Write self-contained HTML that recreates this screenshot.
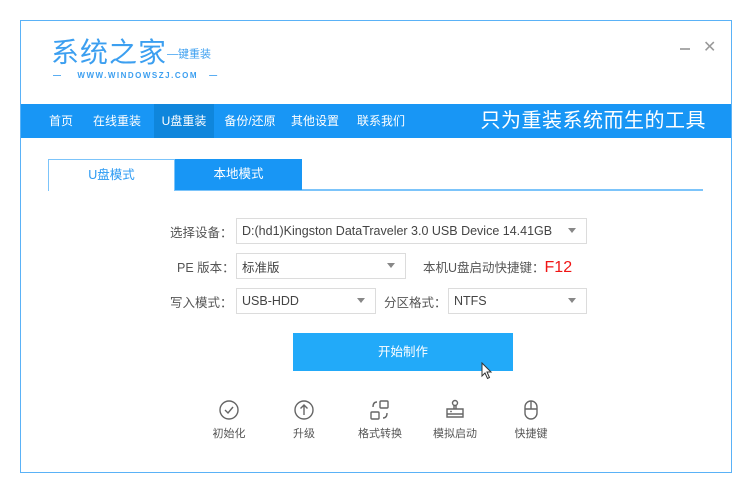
<!DOCTYPE html>
<html><head><meta charset="utf-8"><style>
*{margin:0;padding:0;box-sizing:border-box}
body{width:746px;height:485px;background:#fff;font-family:"Liberation Sans","Noto Sans CJK SC",sans-serif;position:relative;overflow:hidden;color:#555}
.win{position:absolute;left:20px;top:20px;width:712px;height:453px;border:1px solid #5ab2f7;background:#fff}
.a{position:absolute;white-space:nowrap}
.logo{left:51px;top:35px;font-size:28px;color:#3c9ff0;letter-spacing:1px;font-weight:normal;line-height:36px}
.nav{left:21px;top:104px;width:710px;height:34px;background:#1896f5}
.nav span{position:absolute;top:0;height:34px;line-height:34px;color:#fff;font-size:12px;text-align:center}
.sel{display:flex;align-items:center;height:24px;border:1px solid #dcdcdc;font-size:12.5px;color:#444;padding-left:5px}
.sel::after{content:"";position:absolute;right:10px;top:9px;border:4px solid transparent;border-top:5px solid #888}
.lbl{font-size:12.5px;color:#555}
.ic{font-size:11px;color:#555;text-align:center;width:60px}
</style></head><body>
<div class="win"></div>
<div class="a logo">系统之家<span style="font-size:11px;vertical-align:middle;letter-spacing:0">—键重装</span></div>
<div class="a" style="left:53px;top:71px;font-size:8px;color:#3c9ff0;letter-spacing:1.5px;font-weight:bold">—&nbsp;&nbsp;&nbsp;&nbsp;WWW.WINDOWSZJ.COM&nbsp;&nbsp;&nbsp;—</div>
<div class="a" style="left:680px;top:48px;width:10px;height:2px;background:#aaa"></div>
<div class="a" style="left:703px;top:37px;font-size:16px;color:#999">✕</div>
<div class="a nav">
<span style="left:20px;width:40px">首页</span>
<span style="left:66px;width:60px">在线重装</span>
<span style="left:133px;width:60px;background:#0f86dc">U盘重装</span>
<span style="left:198px;width:62px">备份/还原</span>
<span style="left:264px;width:60px">其他设置</span>
<span style="left:330px;width:60px">联系我们</span>
<span style="left:440px;width:245px;font-size:20px;text-align:right;letter-spacing:0.5px">只为重装系统而生的工具</span>
</div>
<div class="a" style="left:48px;top:189px;width:655px;height:2px;background:#7cc4fa"></div>
<div class="a" style="left:48px;top:159px;width:127px;height:32px;border:1px solid #7cc4fa;border-bottom:none;background:#fff;color:#2b9af3;font-size:12.5px;text-align:center;line-height:31px">U盘模式</div>
<div class="a" style="left:175px;top:159px;width:127px;height:31px;background:#1896f5;color:#fff;font-size:12.5px;text-align:center;line-height:31px">本地模式</div>
<div class="a lbl" style="left:170px;top:222px">选择设备：</div>
<div class="a sel" style="left:236px;top:218px;width:351px;height:26px">D:(hd1)Kingston DataTraveler 3.0 USB Device 14.41GB</div>
<div class="a lbl" style="left:177px;top:257px">PE 版本：</div>
<div class="a sel" style="left:236px;top:253px;width:170px;height:26px">标准版</div>
<div class="a lbl" style="left:423px;top:257px">本机U盘启动快捷键：<span style="color:#f01414;font-size:16px">F12</span></div>
<div class="a lbl" style="left:170px;top:292px">写入模式：</div>
<div class="a sel" style="left:236px;top:288px;width:140px;height:26px">USB-HDD</div>
<div class="a lbl" style="left:384px;top:292px">分区格式：</div>
<div class="a sel" style="left:448px;top:288px;width:139px;height:26px">NTFS</div>
<div class="a" style="left:293px;top:333px;width:220px;height:38px;background:#22aaf9;color:#fff;font-size:12.5px;text-align:center;line-height:38px">开始制作</div>
<svg class="a" style="left:481px;top:362px" width="12" height="18" viewBox="0 0 12 18"><path d="M1 1 L1 14 L4 11 L6.5 16.5 L8.5 15.5 L6 10 L10 10 Z" fill="#fff" stroke="#333" stroke-width="1"/></svg>
<svg class="a" style="left:218px;top:399px" width="22" height="22" viewBox="0 0 22 22"><circle cx="11" cy="11" r="9" fill="none" stroke="#666" stroke-width="1.4"/><path d="M7 11 L10 14 L15 8" fill="none" stroke="#666" stroke-width="1.4"/></svg>
<svg class="a" style="left:293px;top:399px" width="22" height="22" viewBox="0 0 22 22"><circle cx="11" cy="11" r="9" fill="none" stroke="#666" stroke-width="1.4"/><path d="M11 16 V6 M7.5 9.5 L11 6 L14.5 9.5" fill="none" stroke="#666" stroke-width="1.4"/></svg>
<svg class="a" style="left:369px;top:399px" width="22" height="22" viewBox="0 0 22 22"><rect x="11" y="2" width="8" height="7" rx="1" fill="none" stroke="#666" stroke-width="1.4"/><rect x="2" y="13" width="8" height="7" rx="1" fill="none" stroke="#666" stroke-width="1.4"/><path d="M8 3 Q4 3 4 8 M14 19 Q18 19 18 14" fill="none" stroke="#666" stroke-width="1.4"/></svg>
<svg class="a" style="left:444px;top:399px" width="22" height="22" viewBox="0 0 22 22"><circle cx="11" cy="4" r="2.5" fill="none" stroke="#666" stroke-width="1.4"/><path d="M10 6.5 V10 H12 V6.5 M3 10 H19 V18 H3 Z M3 15 H19" fill="none" stroke="#666" stroke-width="1.4"/><circle cx="7" cy="12.5" r="0.9" fill="#666"/></svg>
<svg class="a" style="left:520px;top:399px" width="22" height="22" viewBox="0 0 22 22"><rect x="5" y="2" width="12" height="18" rx="6" fill="none" stroke="#666" stroke-width="1.4"/><path d="M5 10 H17 M11 2 V10" fill="none" stroke="#666" stroke-width="1.4"/></svg>
<div class="a ic" style="left:199px;top:425px">初始化</div>
<div class="a ic" style="left:274px;top:425px">升级</div>
<div class="a ic" style="left:350px;top:425px">格式转换</div>
<div class="a ic" style="left:425px;top:425px">模拟启动</div>
<div class="a ic" style="left:501px;top:425px">快捷键</div>
</body></html>
